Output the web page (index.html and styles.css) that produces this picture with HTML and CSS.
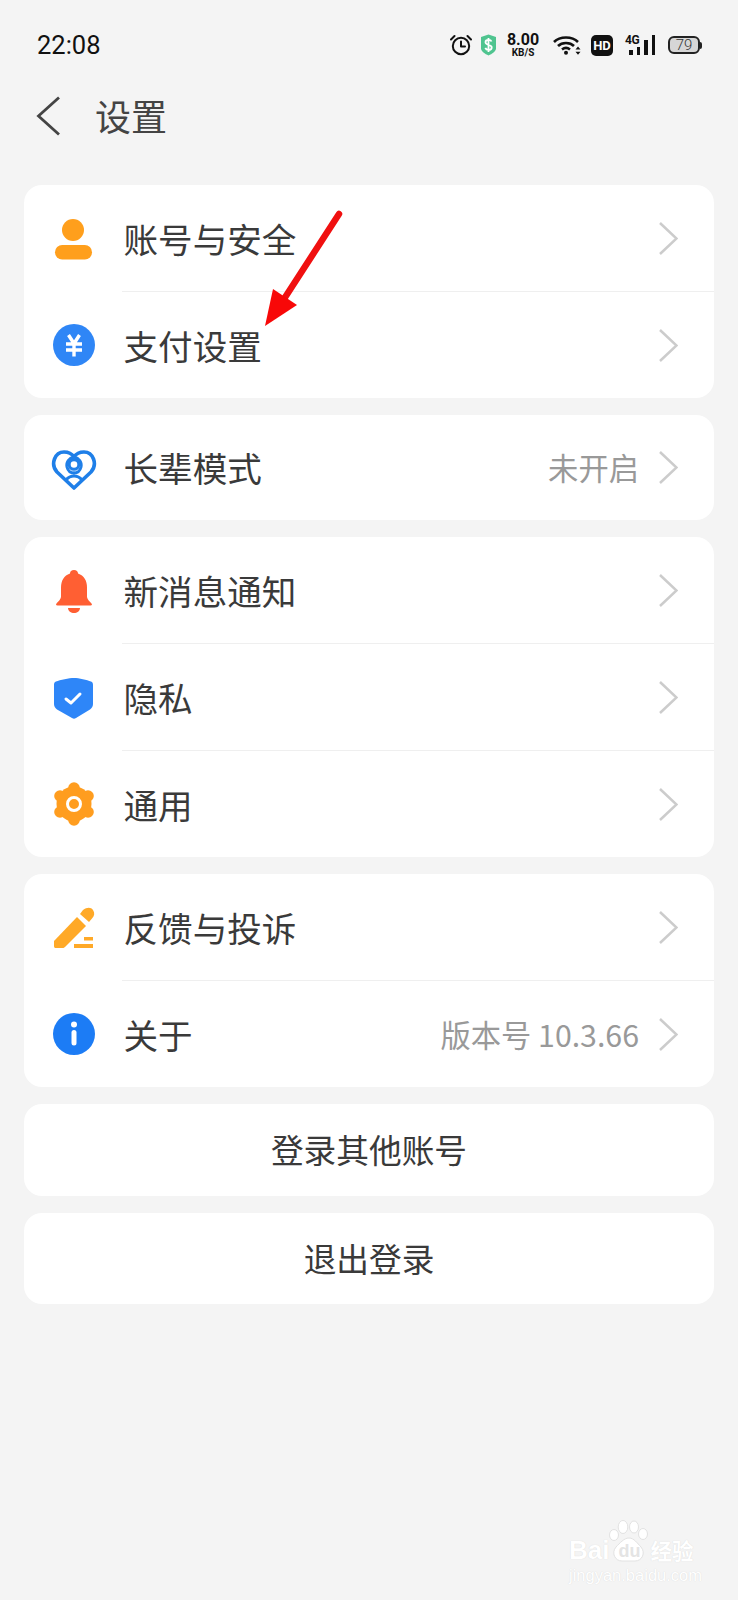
FILE: index.html
```html
<!DOCTYPE html>
<html lang="zh-CN">
  <head>
    <meta charset="UTF-8" />
    <meta name="viewport" content="width=device-width, initial-scale=1.0" />
    <title>设置</title>
    <link rel="stylesheet" href="styles.css">
  </head>
  <body>
    <div class="page">
      <div class="statusBar">
        <span class="time">22:08</span>
        <div class="statusIcons">
          <svg class="stAlarm" width="22" height="22" viewBox="0 0 22 22" fill="none" stroke="#111" stroke-width="2">
            <circle cx="11" cy="12" r="8.200" />
            <path d="M11 7.500v5h4" stroke-linecap="round" stroke-linejoin="round" />
            <path d="M1 5.500 4.500 2M21 5.500 17.500 2" stroke-linecap="round" />
          </svg>
          <svg class="stShield" width="17" height="22" viewBox="0 0 16 22">
            <path d="M8 0.500 15.500 3v11.500c0 2.500-4 5.500-7.500 7-3.500-1.500-7.500-4.500-7.500-7V3z" fill="#4fc48f" />
            <path d="M11 7.500C10.500 6 9 5.800 8 5.800c-1.500 0-3 .7-3 2.400 0 3.400 6.200 1.800 6.200 5.200 0 1.700-1.600 2.500-3.200 2.500-1.300 0-2.700-.6-3.200-2M8 4v14" fill="none" stroke="#fff" stroke-width="1.800" />
          </svg>
          <div class="speed">
            <span class="speedNum">8.00</span>
            <span class="speedUnit">KB/S</span>
          </div>
          <svg class="stWifi" width="28" height="20" viewBox="0 0 28 20" fill="none" stroke="#111" stroke-width="2.600">
            <path d="M1 7C7 1 19 1 25 7" />
            <path d="M5 11C9 7 17 7 21 11" />
            <path d="M9 14.500c2.500-2 5.500-2 8 0" />
            <circle cx="13" cy="17.800" r="2" fill="#111" stroke="none" />
            <path d="M25 11.500l-2.500 3h5zM25 19.800l-2.500-3h5z" fill="#111" stroke="none" />
          </svg>
          <span class="stHd">HD</span>
          <div class="stSignal">
            <span class="sigLabel">4G</span>
            <span class="sigBar sigBar1"></span>
            <span class="sigBar sigBar2"></span>
            <span class="sigBar sigBar3"></span>
            <span class="sigBar sigBar4"></span>
          </div>
          <div class="stBattery">
            <span class="batteryBody">79</span>
            <span class="batteryCap"></span>
          </div>
        </div>
      </div>

      <div class="navBar">
        <svg class="backIcon" width="24" height="40" viewBox="0 0 24 40" fill="none" stroke="#444" stroke-width="2.800">
          <path d="M23 1.500 2.500 20 23 38.500" />
        </svg>
        <h1>设置</h1>
      </div>

      <div class="cardList">
        <div class="card">
          <div class="row">
            <div class="rowIcon">
              <svg width="48" height="48" viewBox="0 0 48 48">
                <circle cx="23" cy="15" r="11" fill="#ff9f1c" />
                <rect x="5" y="30" width="37" height="14.500" rx="7.200" fill="#ff9f1c" />
              </svg>
            </div>
            <div class="rowBody">
              <span class="rowLabel">账号与安全</span>
              <svg class="chevron" width="19" height="33" viewBox="0 0 19 33"><path d="M1 1l16.500 15.500L1 32" /></svg>
            </div>
          </div>
          <div class="row">
            <div class="rowIcon">
              <svg width="48" height="48" viewBox="0 0 48 48">
                <circle cx="24" cy="24" r="21" fill="#2f86f6" />
                <path d="M18.500 14l5.500 8.500 5.500-8.500M16 23h16M16 29h16M24 23v12.500" fill="none" stroke="#fff" stroke-width="3.400" />
              </svg>
            </div>
            <div class="rowBody">
              <span class="rowLabel">支付设置</span>
              <svg class="chevron" width="19" height="33" viewBox="0 0 19 33"><path d="M1 1l16.500 15.500L1 32" /></svg>
            </div>
          </div>
        </div>

        <div class="card cardSingle">
          <div class="row">
            <div class="rowIcon">
              <svg width="48" height="48" viewBox="0 0 48 48" fill="none" stroke="#1f7fe8" stroke-width="3.600" stroke-linejoin="round" stroke-linecap="round">
                <path d="M24 44 7 28C0 20 5 8 14 8c4 0 8 2 10 5 2-3 6-5 10-5 9 0 14 12 7 20z" />
                <circle cx="24" cy="20.500" r="4.800" stroke-width="3" />
                <path d="M24 13c-5 1-8 5-7 10 1 4 4 6 7 6" stroke-width="3" />
                <path d="M24 13c5 1 8 5 7 10-1 4-4 6-7 6" stroke-width="3" />
                <path d="M16 36c2-2.500 5-4 8-4s6 1.500 8 4" stroke-width="3" />
              </svg>
            </div>
            <div class="rowBody">
              <span class="rowLabel">长辈模式</span>
              <span class="rowValue">未开启</span>
              <svg class="chevron" width="19" height="33" viewBox="0 0 19 33"><path d="M1 1l16.500 15.500L1 32" /></svg>
            </div>
          </div>
        </div>

        <div class="card">
          <div class="row">
            <div class="rowIcon">
              <svg width="48" height="48" viewBox="0 0 48 48" fill="#ff5f33">
                <path d="M24 3c2.500 0 4 1.500 4 3.500 6 2 9 7 9 14v9c0 3 3 5 4.500 7 .8 1 .5 2-1 2h-33c-1.500 0-1.800-1-1-2 1.500-2 4.500-4 4.500-7v-9c0-7 3-12 9-14 0-2 1.500-3.500 4-3.500z" />
                <path d="M18 41h12c0 3-3 5-6 5s-6-2-6-5z" />
              </svg>
            </div>
            <div class="rowBody">
              <span class="rowLabel">新消息通知</span>
              <svg class="chevron" width="19" height="33" viewBox="0 0 19 33"><path d="M1 1l16.500 15.500L1 32" /></svg>
            </div>
          </div>
          <div class="row">
            <div class="rowIcon">
              <svg width="48" height="48" viewBox="0 0 48 48">
                <path d="M24 4c5 0 13 2 17 3.500 1.500.5 2 1.500 2 3.500v19c0 2-1 4-3 5.500L26 44c-1.500 1-2.500 1-4 0L7 35.500c-2-1.500-3-3.500-3-5.500V11c0-2 .5-3 2-3.500C10 6 19 4 24 4z" fill="#2e86f8" />
                <path d="M16 25l5 4 9-9" fill="none" stroke="#fff" stroke-width="3" stroke-linecap="round" stroke-linejoin="round" />
              </svg>
            </div>
            <div class="rowBody">
              <span class="rowLabel">隐私</span>
              <svg class="chevron" width="19" height="33" viewBox="0 0 19 33"><path d="M1 1l16.500 15.500L1 32" /></svg>
            </div>
          </div>
          <div class="row">
            <div class="rowIcon">
              <svg width="48" height="48" viewBox="0 0 48 48" fill="#ff9d1f">
                <circle cx="24" cy="24" r="17.500" />
                <circle cx="24" cy="8" r="5.800" />
                <circle cx="24" cy="40" r="5.800" />
                <circle cx="10" cy="16" r="5.800" />
                <circle cx="38" cy="16" r="5.800" />
                <circle cx="10" cy="32" r="5.800" />
                <circle cx="38" cy="32" r="5.800" />
                <circle cx="24" cy="24" r="6.500" fill="none" stroke="#fff" stroke-width="3" />
              </svg>
            </div>
            <div class="rowBody">
              <span class="rowLabel">通用</span>
              <svg class="chevron" width="19" height="33" viewBox="0 0 19 33"><path d="M1 1l16.500 15.500L1 32" /></svg>
            </div>
          </div>
        </div>

        <div class="card">
          <div class="row">
            <div class="rowIcon">
              <svg width="48" height="48" viewBox="0 0 48 48" fill="#ffa927">
                <path d="M4 37 27 13l9 9-21 21c-1 1-2 1-3 1H6c-1.500 0-2-.5-2-2z" />
                <path d="M30 10l3-4c4-3 8-3 10 0 2 3 1.500 6-1 8.500L39 18z" />
                <rect x="34" y="33" width="9" height="3.500" />
                <rect x="24" y="40" width="19" height="4" />
              </svg>
            </div>
            <div class="rowBody">
              <span class="rowLabel">反馈与投诉</span>
              <svg class="chevron" width="19" height="33" viewBox="0 0 19 33"><path d="M1 1l16.500 15.500L1 32" /></svg>
            </div>
          </div>
          <div class="row">
            <div class="rowIcon">
              <svg width="48" height="48" viewBox="0 0 48 48">
                <circle cx="24" cy="24" r="21" fill="#1c7cf5" />
                <circle cx="24" cy="14.500" r="3" fill="#fff" />
                <rect x="21.500" y="20" width="5" height="15.500" rx="2.500" fill="#fff" />
              </svg>
            </div>
            <div class="rowBody">
              <span class="rowLabel">关于</span>
              <span class="rowValue">版本号 10.3.66</span>
              <svg class="chevron" width="19" height="33" viewBox="0 0 19 33"><path d="M1 1l16.500 15.500L1 32" /></svg>
            </div>
          </div>
        </div>

        <div class="card cardButton">登录其他账号</div>
        <div class="card cardButton">退出登录</div>
      </div>

      <!-- red arrow drawn over the screenshot -->
      <svg class="annotation" width="90" height="125" viewBox="0 0 90 125">
        <path d="M81 7 26 92" fill="none" stroke="#f01010" stroke-width="6.500" stroke-linecap="round" />
        <path d="M7 119 15 82 39 98z" fill="#f80808" />
      </svg>

      <div class="watermark">
        <div class="wmBrand">
          <span class="wmBai">Bai</span>
          <div class="wmPaw">
            <svg width="40" height="42" viewBox="0 0 40 42" fill="#fff" stroke="#e2e2e2" stroke-width="1">
              <ellipse cx="5" cy="15" rx="4.500" ry="5.500" />
              <ellipse cx="14" cy="7" rx="4.800" ry="6.500" />
              <ellipse cx="25" cy="7" rx="4.500" ry="6" />
              <ellipse cx="34" cy="14" rx="4.500" ry="5.500" />
              <path d="M20 18c5 0 8 5 12 9 5 6 1 14-6 14H13C6 41 2 33 7 27c4-4 8-9 13-9z" />
            </svg>
            <span class="wmDu">du</span>
          </div>
          <span class="wmCn">经验</span>
        </div>
        <div class="wmUrl">jingyan.baidu.com</div>
      </div>
    </div>
  </body>
</html>
```

FILE: styles.css
```css
/* Reset some default styles */
body,
h1 {
  margin: 0;
  padding: 0;
}

body {
  font-family: "Noto Sans CJK SC", "Noto Sans", sans-serif;
  background-color: #f4f4f4;
  color: #333;
}

.page {
  position: relative;
  width: 738px;
  height: 1600px;
  overflow: hidden;
}

/* Status bar */
.statusBar {
  display: flex;
  align-items: center;
  justify-content: space-between;
  height: 90px;
  padding: 0 36px 0 37px;
}

.time {
  font-family: Roboto, sans-serif;
  font-size: 25.500px;
  color: #111;
}

.statusIcons {
  display: flex;
  align-items: center;
  color: #111;
  font-family: Roboto, sans-serif;
}

.stShield {
  margin-left: 8px;
}

.speed {
  display: flex;
  flex-direction: column;
  align-items: center;
  width: 34px;
  margin-left: 9px;
  font-weight: 700;
}

.speedNum {
  font-size: 16px;
  line-height: 15px;
}

.speedUnit {
  font-size: 10px;
  line-height: 11px;
}

.stWifi {
  margin-left: 13px;
}

.stHd {
  width: 22px;
  height: 21px;
  margin-left: 10px;
  background-color: #111;
  border-radius: 5px;
  color: #fff;
  font-size: 13px;
  font-weight: 700;
  line-height: 21px;
  text-align: center;
}

.stSignal {
  display: flex;
  align-items: flex-end;
  position: relative;
  width: 30px;
  height: 20px;
  margin-left: 12px;
  padding-left: 4px;
  box-sizing: border-box;
  gap: 4px;
}

.sigLabel {
  position: absolute;
  left: 0;
  top: -1px;
  font-size: 12px;
  font-weight: 700;
  line-height: 12px;
  letter-spacing: -0.500px;
}

.sigBar {
  width: 3.500px;
  background-color: #111;
}

.sigBar1 {
  height: 5px;
}

.sigBar2 {
  height: 8px;
}

.sigBar3 {
  height: 15px;
}

.sigBar4 {
  height: 20px;
}

.stBattery {
  display: flex;
  align-items: center;
  margin-left: 13px;
}

.batteryBody {
  width: 32px;
  height: 18px;
  box-sizing: border-box;
  border: 2px solid #222;
  border-radius: 6px;
  background-color: #d6d6d6;
  color: #333;
  font-size: 15px;
  font-weight: 300;
  line-height: 14px;
  text-align: center;
}

.batteryCap {
  width: 2px;
  height: 7px;
  background-color: #222;
  border-radius: 0 2px 2px 0;
}

/* Title bar */
.navBar {
  display: flex;
  align-items: center;
  height: 52px;
  padding-left: 36px;
}

.backIcon {
  margin-right: 35px;
}

h1 {
  font-size: 36px;
  font-weight: 400;
  color: #444;
  line-height: 50px;
  padding-bottom: 2px;
}

/* Cards */
.cardList {
  display: flex;
  flex-direction: column;
  gap: 17px;
  margin: 43px 24px 0;
}

.card {
  background-color: #fff;
  border-radius: 18px;
}

.row {
  display: flex;
  align-items: stretch;
}

.rowIcon {
  display: flex;
  align-items: center;
  justify-content: center;
  width: 100px;
  margin-right: -2px;
}

.rowBody {
  display: flex;
  align-items: center;
  flex: 1;
  height: 106px;
  padding-left: 1.500px;
  padding-right: 36px;
}

.cardSingle .rowBody {
  height: 105px;
}

.row:not(:last-child) .rowBody {
  border-bottom: 1px solid #efefef;
}

.rowLabel {
  flex: 1;
  padding-bottom: 1px;
  font-size: 34.600px;
  color: #3a3a3a;
}

.rowValue {
  margin-right: 20px;
  padding-bottom: 1px;
  font-size: 30.300px;
  color: #999;
}

.chevron {
  fill: none;
  stroke: #ccc;
  stroke-width: 2.500;
}

.cardButton {
  height: 91.500px;
  font-size: 32.700px;
  line-height: 89px;
  text-align: center;
  color: #3a3a3a;
}

/* Overlays */
.annotation {
  position: absolute;
  left: 258px;
  top: 207px;
}

.watermark {
  position: absolute;
  left: 569px;
  top: 1520px;
  width: 140px;
  color: #fff;
  text-shadow: 0 0 1px #d4d4d4;
}

.wmBrand {
  display: flex;
  align-items: flex-end;
  height: 42px;
}

.wmBai {
  font-family: "Liberation Sans", sans-serif;
  font-size: 26px;
  font-weight: 700;
  line-height: 24px;
}

.wmPaw {
  position: relative;
  width: 40px;
  height: 42px;
  margin-right: 1px;
}

.wmDu {
  position: absolute;
  left: 9px;
  bottom: 1px;
  font-family: "Liberation Sans", sans-serif;
  font-size: 18px;
  font-weight: 700;
  line-height: 20px;
  color: #e4e4e4;
  text-shadow: none;
}

.wmCn {
  font-size: 21.500px;
  font-weight: 700;
  line-height: 24px;
}

.wmUrl {
  margin-top: 4px;
  font-family: "Liberation Sans", sans-serif;
  font-size: 16.500px;
  line-height: 18px;
  white-space: nowrap;
}
```
